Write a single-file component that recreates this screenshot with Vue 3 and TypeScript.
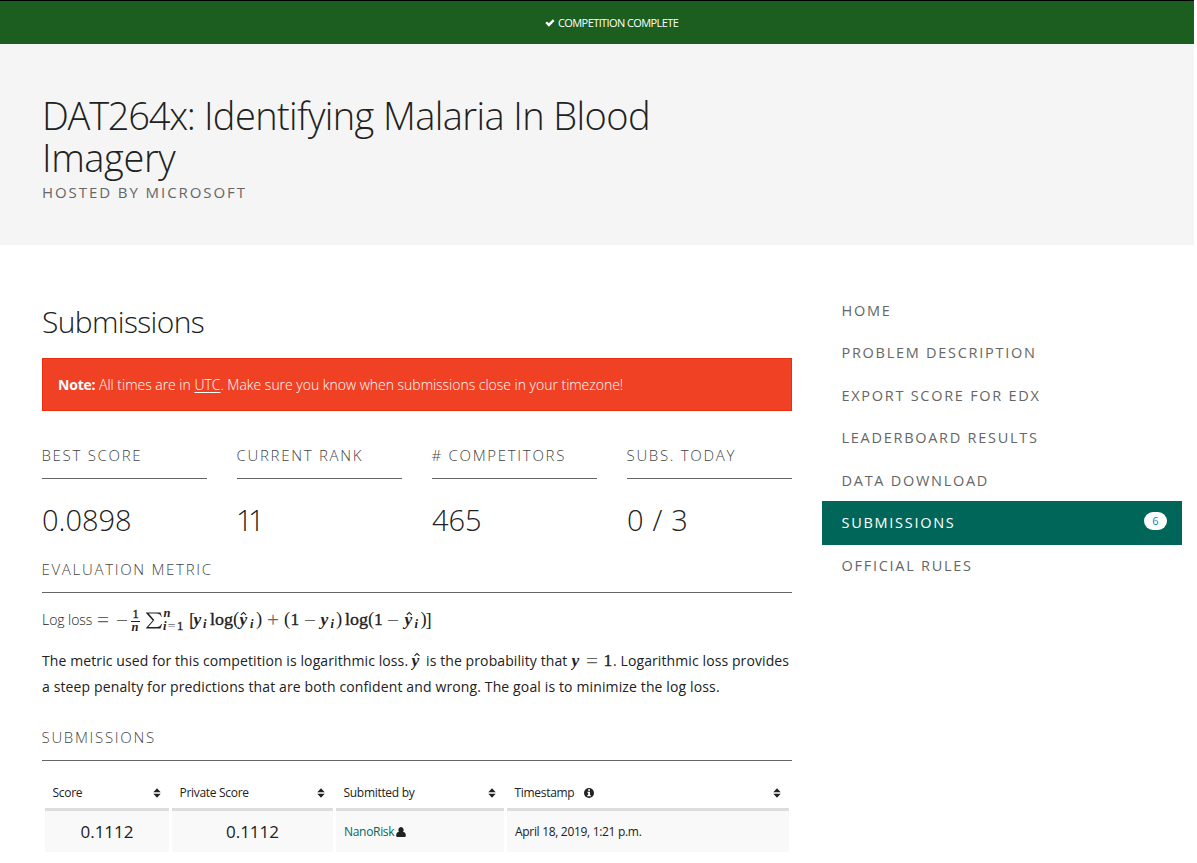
<script setup lang="ts">
interface NavItem { label: string; count?: number }
interface Glyph { t: string; x: number; y: number; k: string; w?: number }
const nav: NavItem[] = [
  { label: 'Home' },
  { label: 'Problem description' },
  { label: 'Export score for edX' },
  { label: 'Leaderboard results' },
  { label: 'Data download' },
  { label: 'Submissions', count: 6 },
  { label: 'Official rules' },
]
const stats = [
  { label: 'Best score', value: '0.0898', cls: '' },
  { label: 'Current rank', value: '11', cls: 'tight' },
  { label: '# Competitors', value: '465', cls: '' },
  { label: 'Subs. today', value: '0 / 3', cls: 'loose' },
]
const columns = ['Score', 'Private Score', 'Submitted by', 'Timestamp']

// Typeset pieces of the log loss formula; the baseline is y = 25.
const glyphs: Glyph[] = [
  { t: '=', x: 1, y: 27, k: 'rel', w: 12 },
  { t: '−', x: 20, y: 27, k: 'rel', w: 12 },
  { t: '1', x: 36.5, y: 18, k: 'small up' },
  { t: 'n', x: 35.5, y: 31, k: 'small it' },
  { t: 'n', x: 67.5, y: 17, k: 'small it' },
  { t: 'i', x: 67, y: 30, k: 'small it' },
  { t: '=', x: 71.5, y: 30, k: 'small rel', w: 8 },
  { t: '1', x: 81, y: 30, k: 'small up' },
  { t: '[', x: 93, y: 26, k: 'par' },
  { t: 'y', x: 97.5, y: 25, k: 'it' },
  { t: 'i', x: 107, y: 28, k: 'small it' },
  { t: 'log', x: 114, y: 25, k: 'up', w: 23 },
  { t: '(', x: 137, y: 25, k: 'par' },
  { t: 'y', x: 143.5, y: 25, k: 'it' },
  { t: 'i', x: 154, y: 28, k: 'small it' },
  { t: ')', x: 160, y: 25, k: 'par' },
  { t: '+', x: 171, y: 27, k: 'rel', w: 12 },
  { t: '(', x: 188, y: 25, k: 'par' },
  { t: '1', x: 194.5, y: 25, k: 'up' },
  { t: '−', x: 208, y: 27, k: 'rel', w: 12 },
  { t: 'y', x: 224.5, y: 25, k: 'it' },
  { t: 'i', x: 234.5, y: 28, k: 'small it' },
  { t: ')', x: 240, y: 25, k: 'par' },
  { t: 'log', x: 249, y: 25, k: 'up', w: 23 },
  { t: '(', x: 272, y: 25, k: 'par' },
  { t: '1', x: 278, y: 25, k: 'up' },
  { t: '−', x: 291, y: 27, k: 'rel', w: 12 },
  { t: 'y', x: 308.5, y: 25, k: 'it' },
  { t: 'i', x: 318.5, y: 28, k: 'small it' },
  { t: ')', x: 324.5, y: 25, k: 'par' },
  { t: ']', x: 329.5, y: 26, k: 'par' },
]
</script>

<template>
  <div class="page">
    <div class="banner">
      <svg class="check" viewBox="0 0 11 9"><path d="M0.3 4.6 2.1 2.8 4.2 4.9 8.7 0.4 10.6 2.2 4.2 8.6Z" /></svg>
      <span>COMPETITION COMPLETE</span>
    </div>
    <header class="hero">
      <h1><span class="t1"><span class="code">DAT264x:</span> Identifying Malaria In Blood</span><span class="t2">Imagery</span></h1>
      <p class="host">HOSTED BY MICROSOFT</p>
    </header>
    <div class="columns">
      <main>
        <h2>Submissions</h2>
        <div class="alert"><b>Note:</b> All times are in <a>UTC</a>. Make sure you know when submissions close in your timezone!</div>
        <div class="stats">
          <div v-for="s in stats" :key="s.label">
            <h3>{{ s.label }}</h3>
            <div class="value" :class="s.cls">{{ s.value }}</div>
          </div>
        </div>
        <h3>Evaluation metric</h3>
        <div class="formula">
          <span class="ll">Log loss</span>
          <svg class="tex" width="340" height="40" viewBox="0 0 340 40">
            <text v-for="(g, i) in glyphs" :key="i" :x="g.x" :y="g.y" :class="g.k" :textLength="g.w" lengthAdjust="spacingAndGlyphs">{{ g.t }}</text>
            <path class="bar" d="M35 21.5H44" />
            <path class="sigma" transform="translate(49.5 12)" d="M.5.5H15L16.3 4.7H15.6C14.8 2.3 13.6 1.6 11 1.6H3.2L8.8 8.1 2.8 15.1H11.2C13.7 15.1 15 14.2 15.8 12.1H16.5L15 16.5H.5V15.9L7.2 8.6.5 1.1Z" />
            <path class="hat" d="M145 14.8 147.5 12.6 150 14.8M310.8 14.8 313.3 12.6 315.8 14.8" />
          </svg>
        </div>
        <div class="text">
          <p class="p1">
            <span class="s1">The metric used for this competition is logarithmic loss.</span>
            <svg class="tex m1" width="11" height="26" viewBox="0 0 11 26"><text class="it" x=".5" y="18">y</text><path class="hat" d="M3.5 7.8 6 5.6 8.5 7.8" /></svg>
            <span class="s2">is the probability that</span>
            <svg class="tex m2" width="42" height="26" viewBox="0 0 42 26"><text class="it" x=".5" y="18">y</text><text class="rel" x="15" y="20" textLength="12" lengthAdjust="spacingAndGlyphs">=</text><text class="up" x="32.5" y="18">1</text></svg>
            <span>. Logarithmic loss provides</span>
          </p>
          <p class="p2">a steep penalty for predictions that are both confident and wrong. The goal is to minimize the log loss.</p>
        </div>
        <h3>Submissions</h3>
        <table>
          <thead>
            <tr>
              <th v-for="c in columns" :key="c">
                <div class="th">
                  <span>{{ c }}</span>
                  <svg v-if="c === 'Timestamp'" class="info" viewBox="0 0 10 10"><circle cx="5" cy="5" r="5" /><path fill="#fff" d="M4.1 1.2H6V2.8H4.1ZM3.3 3.7H6V7H6.8V8.2H3.3V7H4.1V4.8H3.3Z" /></svg>
                  <svg class="sort" viewBox="0 0 8 10"><path d="M.3 4.2 4 .2 7.7 4.2ZM.3 5.8H7.7L4 9.8Z" /></svg>
                </div>
              </th>
            </tr>
          </thead>
          <tbody>
            <tr>
              <td class="num">0.1112</td>
              <td class="num">0.1112</td>
              <td><a class="user">NanoRisk</a><svg class="person" viewBox="0 0 10 10"><path d="M5 0A2.7 2.9 0 0 1 7.1 4.7C9 5 9.8 6.3 9.8 8.5 9.8 9.5 9.2 10 8.4 10H1.6C.8 10 .2 9.5.2 8.5.2 6.3 1 5 2.9 4.7A2.7 2.9 0 0 1 5 0Z" /></svg></td>
              <td class="date">April 18, 2019, 1:21 p.m.</td>
            </tr>
          </tbody>
        </table>
      </main>
      <nav>
        <a v-for="n in nav" :key="n.label" :class="{ active: n.count }">
          <span>{{ n.label }}</span>
          <span v-if="n.count" class="badge">{{ n.count }}</span>
        </a>
      </nav>
    </div>
  </div>
</template>

<style>
body { background: #fff; overflow: hidden; }
</style>
<style scoped>
* { box-sizing: border-box; }
.page { width: 1194px; height: 863px; font-family: "Open Sans", "Noto Sans", sans-serif; font-weight: 300; color: #212121; overflow: hidden; white-space: nowrap; }
h1, h2, h3, p { margin: 0; font-weight: 300; }
.banner { height: 44px; border-top: 1px solid #000; background: #1b5e20; color: #fff; display: flex; align-items: center; padding-left: 545px; font-size: 11px; font-weight: 400; letter-spacing: -.59px; }
.check { width: 10px; height: 8px; fill: #fff; margin-right: 3px; }
.hero { height: 201px; background: #f5f5f5; padding: 50px 42px 0; }
h1 { font-size: 38px; line-height: 42px; }
.t1, .t2 { display: block; }
.t1 { letter-spacing: -.6px; }
.code { letter-spacing: -1.25px; }
.t2 { letter-spacing: -.4px; }
.host { font-size: 15px; line-height: 24px; color: #666; letter-spacing: 1.93px; margin-top: 2px; font-weight: 400; }
.columns { display: flex; gap: 30px; padding-left: 42px; }
main { width: 750px; padding-top: 58px; }
h2 { font-size: 30px; line-height: 38px; height: 55px; letter-spacing: -.65px; }
.alert { height: 53px; background: #f04124; border: 1px solid #ea2f10; color: #fff; font-size: 14px; line-height: 51px; padding-left: 15px; letter-spacing: -.02px; }
.alert b { font-weight: 700; letter-spacing: -.2px; }
.alert a { text-decoration: underline; text-underline-offset: 2px; }
.stats { display: grid; grid-template-columns: repeat(4, 165px); gap: 30px; margin-top: 32px; }
h3 { font-size: 15px; line-height: 24px; height: 36px; border-bottom: 1px solid #666; color: #444; text-transform: uppercase; letter-spacing: 1.7px; text-indent: -.5px; }
.value { font-size: 29px; height: 78px; padding-top: 20px; line-height: 42px; }
.tight { letter-spacing: -4.5px; text-indent: -1px; }
.loose { letter-spacing: .7px; }
.formula { display: flex; align-items: center; height: 52px; }
.ll { width: 54px; font-size: 14px; letter-spacing: -.05px; }
.tex { font-family: "Liberation Serif", serif; font-size: 17.5px; letter-spacing: 0; fill: #222; flex: none; }
.formula .tex { margin-top: 2px; }
.it { font-weight: 700; font-style: italic; }
.up { stroke: #222; stroke-width: .35; }
.par { font-size: 18.5px; }
.rel { fill: #666; font-size: 20px; }
.small { font-size: 12.5px; }
.bar { stroke: #222; stroke-width: 1; }
.hat { fill: none; stroke: #222; stroke-width: 1.1; }
.text { height: 80px; font-size: 14px; line-height: 26px; padding-top: 3px; }
.text p { font-weight: 400; letter-spacing: .1px; }
.text .p2 { letter-spacing: .13px; }
.p1 { display: flex; height: 26px; }
.s1 { width: 369px; }
.m1 { margin-right: 4px; }
.s2 { width: 145px; }
table { border-collapse: separate; border-spacing: 3px 0; table-layout: fixed; width: 750px; margin-top: 14px; font-size: 12px; font-weight: 400; }
th { height: 36px; border-bottom: 3px solid #ddd; padding: 2px 8px 0; text-align: left; font-weight: 600; }
th:nth-child(1) { width: 124px; }
th:nth-child(2) { width: 161px; }
th:nth-child(3) { width: 168px; }
.th { display: flex; align-items: center; font-size: 12px; letter-spacing: -.45px; text-indent: -.5px; }
.th span { font-weight: 500; letter-spacing: -.3px; }
.sort { width: 8px; height: 10px; margin-left: auto; fill: #222; }
.info { width: 10px; height: 10px; margin-left: 10px; fill: #222; }
td { height: 41px; background: #f9f9f9; padding: 0 8px; letter-spacing: -.31px; }
.num { text-align: center; font-size: 17px; letter-spacing: 0; padding-bottom: 1px; }
.user { color: #00695c; }
.person { width: 10px; height: 10px; margin-left: 2px; fill: #222; vertical-align: -1px; }
nav { width: 360px; padding-top: 44px; font-weight: 400; color: #666; }
nav a { height: 42.5px; display: flex; align-items: center; padding: 0 15px 0 19.5px; font-size: 14.5px; text-transform: uppercase; letter-spacing: 1.72px; }
nav .active { background: #00665a; color: #fff; height: 44px; margin: -.5px 0 -1px; padding-bottom: 1px; }
.badge { margin-left: auto; background: #fff; color: #008cba; width: 23px; height: 18px; border-radius: 9px; font-size: 11px; line-height: 18px; letter-spacing: 0; text-align: center; margin-bottom: 3px; }
</style>
